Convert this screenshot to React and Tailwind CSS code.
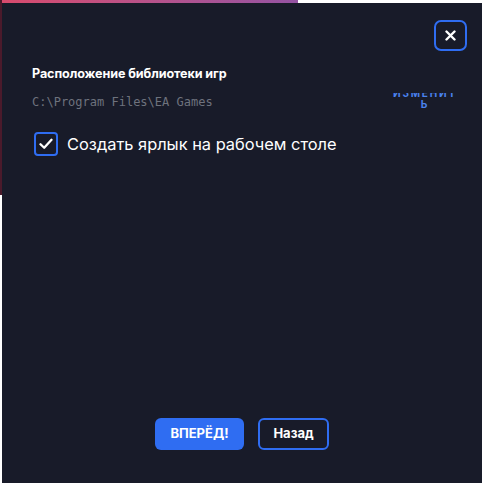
export default function App() {
  return (
    <div className="relative w-[484px] h-[490px] bg-white overflow-hidden" style={{ fontFamily: 'Inter, "Noto Sans", sans-serif' }}>
      <div className="absolute left-0 top-0 h-[3px] w-[298px] bg-gradient-to-r from-[#d94a6c] to-[#9553a3]" />
      <div className="absolute left-0 top-0 h-[195px] w-[2px] bg-[#4a1a2b]" />
      <div className="relative ml-[2px] mt-[3px] w-[480px] h-[480px] bg-[#181b29] flex flex-col">
        <button className="absolute top-[17px] right-[15px] w-[33px] h-[31px] rounded-[7px] border-2 border-[#2f6df2] flex items-center justify-center">
          <svg width="11" height="11" viewBox="0 0 11 11">
            <path d="M1.5 1.5 L9.5 9.5 M9.5 1.5 L1.5 9.5" stroke="white" strokeWidth="2.4" strokeLinecap="round" />
          </svg>
        </button>
        <div className="pt-[61px] pl-[30px] pr-[22px]">
          <div className="text-[12.6px] leading-[20px] font-bold text-white tracking-[-0.1px]">Расположение библиотеки игр</div>
          <div className="flex items-start justify-between mt-[8px]">
            <div className="text-[12px] leading-[20px] text-[#6e727d]" style={{ fontFamily: '"DejaVu Sans Mono", "Liberation Mono", monospace' }}>C:\Program Files\EA Games</div>
            <div className="w-[70px] h-[18px] overflow-hidden mt-[1px] mr-[0px]">
              <div className="-mt-[5px] text-center text-[10px] leading-[11px] font-bold tracking-[1.8px] text-[#4a82ee] break-all">ИЗМЕНИТЬ</div>
            </div>
          </div>
          <div className="flex items-center gap-[9px] mt-[20px] ml-[2px]">
            <div className="w-[24px] h-[24px] rounded-[4px] border-2 border-[#2f6df2] flex items-center justify-center">
              <svg width="14" height="12" viewBox="0 0 14 12">
                <path d="M1.5 6.2 L5.2 9.8 L12.5 1.8" fill="none" stroke="white" strokeWidth="2.3" strokeLinecap="round" strokeLinejoin="round" />
              </svg>
            </div>
            <div className="text-[16.4px] leading-[24px] text-white">Создать ярлык на рабочем столе</div>
          </div>
        </div>
        <div className="mt-auto pb-[33px] flex justify-center gap-[14px]">
          <button className="w-[89px] h-[32px] rounded-[6px] bg-[#2f6df2] text-white text-[13px] font-bold">ВПЕРЁД!</button>
          <button className="w-[71px] h-[32px] rounded-[6px] border-2 border-[#2f6df2] text-white text-[13px] font-bold">Назад</button>
        </div>
      </div>
    </div>
  );
}
